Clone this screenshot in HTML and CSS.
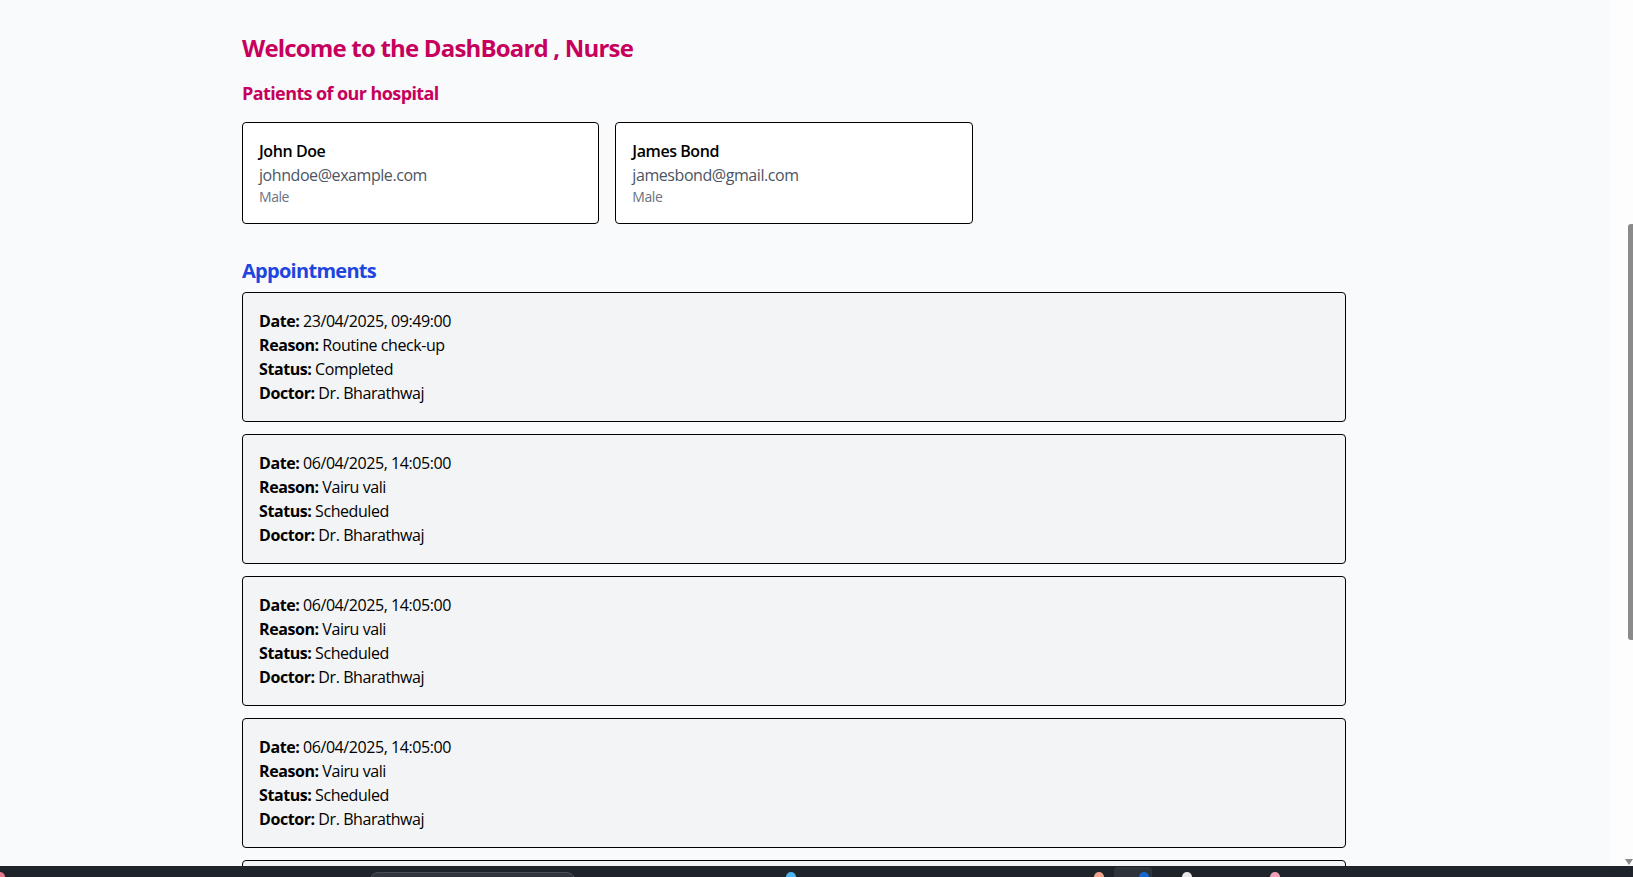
FILE: index.html
```html
<!DOCTYPE html>
<html lang="en">
<head>
<meta charset="utf-8">
<title>Nurse Dashboard</title>
<link rel="stylesheet" href="styles.css">
</head>
<body>
<main class="page">
  <h1 class="title">Welcome to the DashBoard , Nurse</h1>
  <h2 class="subtitle">Patients of our hospital</h2>
  <section class="patients">
    <div class="patient-card">
      <p class="patient-name">John Doe</p>
      <p class="patient-email">johndoe@example.com</p>
      <p class="patient-gender">Male</p>
    </div>
    <div class="patient-card">
      <p class="patient-name">James Bond</p>
      <p class="patient-email">jamesbond@gmail.com</p>
      <p class="patient-gender">Male</p>
    </div>
  </section>

  <h2 class="section-title">Appointments</h2>
  <section class="appointments">
    <div class="appt">
      <p><b>Date:</b> 23/04/2025, 09:49:00</p>
      <p><b>Reason:</b> Routine check-up</p>
      <p><b>Status:</b> Completed</p>
      <p><b>Doctor:</b> Dr. Bharathwaj</p>
    </div>
    <div class="appt">
      <p><b>Date:</b> 06/04/2025, 14:05:00</p>
      <p><b>Reason:</b> Vairu vali</p>
      <p><b>Status:</b> Scheduled</p>
      <p><b>Doctor:</b> Dr. Bharathwaj</p>
    </div>
    <div class="appt">
      <p><b>Date:</b> 06/04/2025, 14:05:00</p>
      <p><b>Reason:</b> Vairu vali</p>
      <p><b>Status:</b> Scheduled</p>
      <p><b>Doctor:</b> Dr. Bharathwaj</p>
    </div>
    <div class="appt">
      <p><b>Date:</b> 06/04/2025, 14:05:00</p>
      <p><b>Reason:</b> Vairu vali</p>
      <p><b>Status:</b> Scheduled</p>
      <p><b>Doctor:</b> Dr. Bharathwaj</p>
    </div>
    <div class="appt">
      <p><b>Date:</b> 06/04/2025, 14:05:00</p>
      <p><b>Reason:</b> Vairu vali</p>
      <p><b>Status:</b> Scheduled</p>
      <p><b>Doctor:</b> Dr. Bharathwaj</p>
    </div>
  </section>
</main>

<div class="scroll-track">
  <div class="scroll-thumb"></div>
  <div class="scroll-arrow"></div>
</div>

<div class="taskbar">
  <span class="tb-dot tb-pink-left"></span>
  <span class="tb-search"></span>
  <span class="tb-dot tb-blue"></span>
  <span class="tb-dot tb-peach"></span>
  <span class="tb-active"><span class="tb-dot tb-darkblue"></span></span>
  <span class="tb-dot tb-white"></span>
  <span class="tb-dot tb-pink"></span>
</div>
</body>
</html>
```

FILE: styles.css
```css
* {
  box-sizing: border-box;
}

html {
  overflow: hidden;
}

body {
  margin: 0;
  background: #f9fafb;
  font-family: "Open Sans", "Noto Sans", "Liberation Sans", sans-serif;
  letter-spacing: -0.027em;
  color: #000;
  height: 877px;
  overflow: hidden;
}

p, h1, h2 {
  margin: 0;
}

.page {
  width: 1104px;
  margin-left: 242px;
  padding-top: 32px;
}

.title {
  font-size: 24px;
  line-height: 32px;
  font-weight: 700;
  letter-spacing: -0.034em;
  color: #c6005c;
  margin-bottom: 15px;
}

.subtitle {
  font-size: 18px;
  line-height: 28px;
  font-weight: 700;
  letter-spacing: -0.033em;
  color: #c6005c;
  margin-bottom: 15px;
}

.patients {
  display: grid;
  grid-template-columns: repeat(3, 1fr);
  gap: 16px;
}

.patient-card {
  background: #ffffff;
  border: 1px solid #000;
  border-radius: 4px;
  padding: 16px;
}

.patient-name {
  font-size: 16px;
  line-height: 24px;
  font-weight: 600;
}

.patient-email {
  font-size: 16px;
  line-height: 24px;
  color: #4b5563;
}

.patient-gender {
  font-size: 14px;
  line-height: 20px;
  color: #6b7280;
}

.section-title {
  margin-top: 32px;
  margin-bottom: 8px;
  font-size: 20px;
  line-height: 28px;
  font-weight: 700;
  letter-spacing: -0.036em;
  color: #1e45e0;
  position: relative;
  top: 1px;
}

.appointments {
  display: flex;
  flex-direction: column;
  gap: 12px;
}

.appt {
  background: #f3f4f6;
  border: 1px solid #000;
  border-radius: 4px;
  padding: 16px;
  font-size: 16px;
  line-height: 24px;
}

.appt b {
  font-weight: 700;
}

/* fake overlay scrollbar from the screenshot */
.scroll-track {
  position: fixed;
  top: 0;
  right: 0;
  width: 23px;
  height: 866px;
  background: #fdfdfd;
}

.scroll-thumb {
  position: absolute;
  right: 0;
  top: 224px;
  width: 5px;
  height: 416px;
  border-radius: 3px 0 0 3px;
  background: #8a8a8a;
}

.scroll-arrow {
  position: absolute;
  right: 0;
  bottom: 1px;
  width: 0;
  height: 0;
  border-left: 4px solid transparent;
  border-right: 4px solid transparent;
  border-top: 6px solid #8a8a8a;
}

/* taskbar strip at the bottom of the screenshot */
.taskbar {
  position: fixed;
  left: 0;
  right: 0;
  bottom: 0;
  height: 11px;
  background: #1e2429;
  overflow: hidden;
}

.tb-dot {
  position: absolute;
  top: 6px;
  width: 10px;
  height: 10px;
  border-radius: 50%;
}

.tb-pink-left { left: -5px; background: #e8788c; }
.tb-blue { left: 786px; background: #4cb4f0; }
.tb-peach { left: 1094px; background: #f0a48c; }
.tb-white { left: 1182px; background: #e8e8ea; }
.tb-pink { left: 1270px; background: #f0a0b8; }
.tb-darkblue { left: 25px; top: 5px; background: #1668d0; }

.tb-search {
  position: absolute;
  left: 370px;
  top: 6px;
  width: 205px;
  height: 20px;
  border-radius: 8px;
  background: #31363c;
  border: 1px solid #4a4f55;
}

.tb-active {
  position: absolute;
  left: 1114px;
  top: 1px;
  width: 38px;
  height: 20px;
  border-radius: 4px;
  background: #2e343a;
}
```
